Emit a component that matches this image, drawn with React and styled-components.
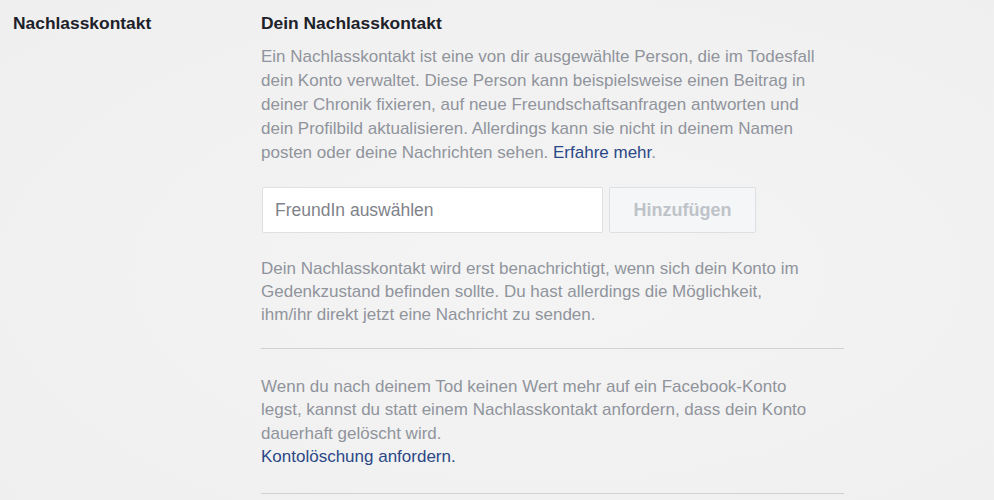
import React from "react"
import styled, {createGlobalStyle} from "styled-components"

const GlobalStyle = createGlobalStyle`
  html, body {
    margin: 0;
    padding: 0;
    background: #f2f2f2;
  }
  body {
    font-family: "Liberation Sans", Arial, sans-serif;
    -webkit-font-smoothing: antialiased;
  }
`

const Page = styled.div`
  width: 994px;
  height: 500px;
  overflow: hidden;
  display: grid;
  grid-template-columns: 261px 583px;
  background: radial-gradient(ellipse at 55% 55%, #f4f4f4 0%, #f1f1f1 60%, #efefef 100%);
`

const SideLabel = styled.div`
  padding: 13px 0 0 13px;
  font-size: 17.4px;
  font-weight: bold;
  color: #1d2129;
  line-height: 20px;
`

const Content = styled.div`
  padding-top: 13px;
  display: flex;
  flex-direction: column;
`

const Heading = styled.div`
  font-size: 17.4px;
  font-weight: bold;
  color: #1d2129;
  line-height: 20px;
  margin-bottom: 12px;
`

const Text = styled.p`
  margin: ${p => p.$top || 0}px 0 0;
  font-size: 17px;
  line-height: ${p => p.$lh || 24}px;
  color: #90949c;
  white-space: nowrap;
`

const Link = styled.a`
  color: #2b4886;
  text-decoration: none;
  cursor: pointer;
`

const FormRow = styled.div`
  display: flex;
  gap: 6px;
  margin: 22px 0 24px 1px;
`

const Input = styled.input`
  box-sizing: border-box;
  width: 341px;
  height: 46px;
  padding: 0 12px;
  border: 1px solid #dddfe2;
  border-radius: 2px;
  background: #fff;
  font-family: inherit;
  font-size: 17.5px;
  color: #1d2129;
  outline: 0;

  &::placeholder {
    color: #7f838a;
  }
`

const Button = styled.button`
  box-sizing: border-box;
  width: 147px;
  height: 46px;
  border: 1px solid #dddfe2;
  border-radius: 2px;
  background: #f5f6f7;
  font-family: inherit;
  font-size: 18px;
  font-weight: bold;
  color: #bec3c9;
`

const Divider = styled.hr`
  margin: ${p => p.$top || 0}px 0 0;
  border: 0;
  border-top: 1px solid #cfd1d4;
  width: 583px;
`

const App = () => (
  <>
    <GlobalStyle/>
    <Page>
      <SideLabel>Nachlasskontakt</SideLabel>
      <Content>
        <Heading>Dein Nachlasskontakt</Heading>
        <Text>
          Ein Nachlasskontakt ist eine von dir ausgewählte Person, die im Todesfall<br/>
          dein Konto verwaltet. Diese Person kann beispielsweise einen Beitrag in<br/>
          deiner Chronik fixieren, auf neue Freundschaftsanfragen antworten und<br/>
          dein Profilbild aktualisieren. Allerdings kann sie nicht in deinem Namen<br/>
          posten oder deine Nachrichten sehen. <Link>Erfahre mehr</Link>.
        </Text>
        <FormRow>
          <Input placeholder="FreundIn auswählen"/>
          <Button disabled>Hinzufügen</Button>
        </FormRow>
        <Text $lh={23}>
          Dein Nachlasskontakt wird erst benachrichtigt, wenn sich dein Konto im<br/>
          Gedenkzustand befinden sollte. Du hast allerdings die Möglichkeit,<br/>
          ihm/ihr direkt jetzt eine Nachricht zu senden.
        </Text>
        <Divider $top={22}/>
        <Text $lh={23.3} $top={26}>
          Wenn du nach deinem Tod keinen Wert mehr auf ein Facebook-Konto<br/>
          legst, kannst du statt einem Nachlasskontakt anfordern, dass dein Konto<br/>
          dauerhaft gelöscht wird.<br/>
          <Link>Kontolöschung anfordern.</Link>
        </Text>
        <Divider $top={25}/>
      </Content>
    </Page>
  </>
)

export default App
